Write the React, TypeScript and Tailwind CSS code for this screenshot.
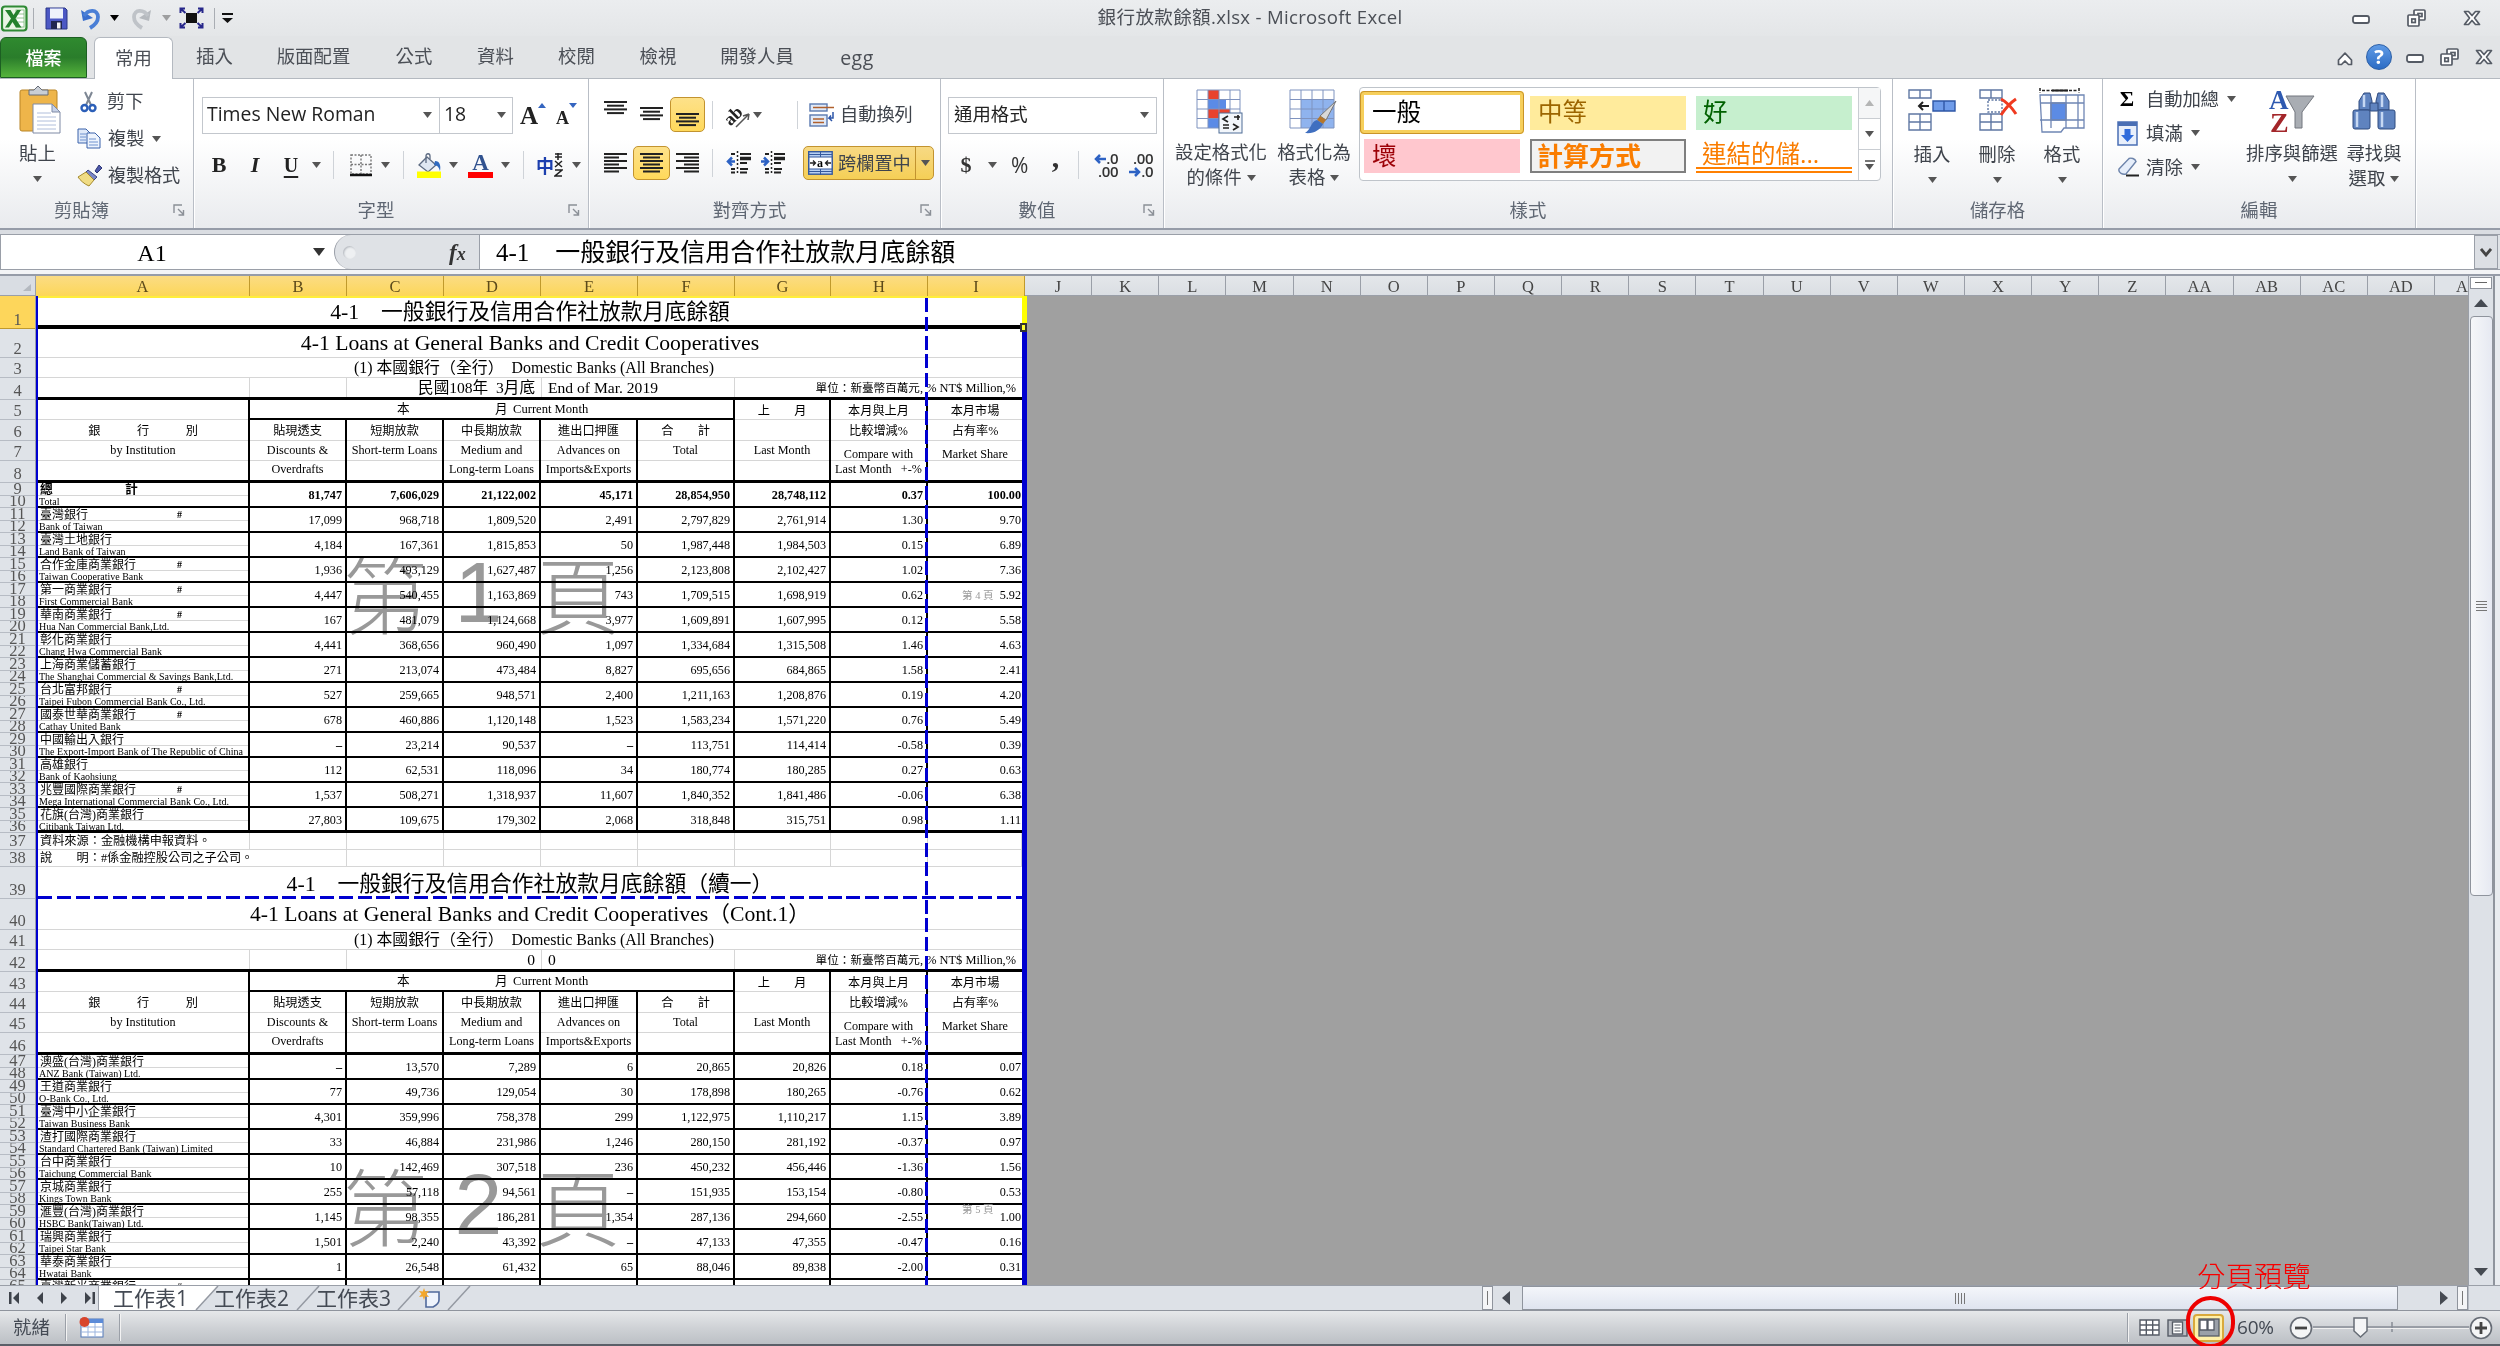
import React from "react";

/* ---------- data ---------- */

type Bank = { zh: string; en: string; mark?: boolean; v: string[] };

const PAGE_ONE: Bank[] = [
  { zh: "臺灣銀行", en: "Bank of Taiwan", mark: true, v: ["17,099", "968,718", "1,809,520", "2,491", "2,797,829", "2,761,914", "1.30", "9.70"] },
  { zh: "臺灣土地銀行", en: "Land Bank of Taiwan", v: ["4,184", "167,361", "1,815,853", "50", "1,987,448", "1,984,503", "0.15", "6.89"] },
  { zh: "合作金庫商業銀行", en: "Taiwan Cooperative Bank", mark: true, v: ["1,936", "493,129", "1,627,487", "1,256", "2,123,808", "2,102,427", "1.02", "7.36"] },
  { zh: "第一商業銀行", en: "First Commercial Bank", mark: true, v: ["4,447", "540,455", "1,163,869", "743", "1,709,515", "1,698,919", "0.62", "5.92"] },
  { zh: "華南商業銀行", en: "Hua Nan Commercial Bank,Ltd.", mark: true, v: ["167", "481,079", "1,124,668", "3,977", "1,609,891", "1,607,995", "0.12", "5.58"] },
  { zh: "彰化商業銀行", en: "Chang Hwa Commercial Bank", v: ["4,441", "368,656", "960,490", "1,097", "1,334,684", "1,315,508", "1.46", "4.63"] },
  { zh: "上海商業儲蓄銀行", en: "The Shanghai Commercial & Savings Bank,Ltd.", v: ["271", "213,074", "473,484", "8,827", "695,656", "684,865", "1.58", "2.41"] },
  { zh: "台北富邦銀行", en: "Taipei Fubon Commercial Bank Co., Ltd.", mark: true, v: ["527", "259,665", "948,571", "2,400", "1,211,163", "1,208,876", "0.19", "4.20"] },
  { zh: "國泰世華商業銀行", en: "Cathay United Bank", mark: true, v: ["678", "460,886", "1,120,148", "1,523", "1,583,234", "1,571,220", "0.76", "5.49"] },
  { zh: "中國輸出入銀行", en: "The Export-Import Bank of The Republic of China", v: ["–", "23,214", "90,537", "–", "113,751", "114,414", "-0.58", "0.39"] },
  { zh: "高雄銀行", en: "Bank of Kaohsiung", v: ["112", "62,531", "118,096", "34", "180,774", "180,285", "0.27", "0.63"] },
  { zh: "兆豐國際商業銀行", en: "Mega International Commercial Bank Co., Ltd.", mark: true, v: ["1,537", "508,271", "1,318,937", "11,607", "1,840,352", "1,841,486", "-0.06", "6.38"] },
  { zh: "花旗(台灣)商業銀行", en: "Citibank Taiwan Ltd.", v: ["27,803", "109,675", "179,302", "2,068", "318,848", "315,751", "0.98", "1.11"] },
];

const PAGE_TWO: Bank[] = [
  { zh: "澳盛(台灣)商業銀行", en: "ANZ Bank (Taiwan) Ltd.", v: ["–", "13,570", "7,289", "6", "20,865", "20,826", "0.18", "0.07"] },
  { zh: "王道商業銀行", en: "O-Bank Co., Ltd.", v: ["77", "49,736", "129,054", "30", "178,898", "180,265", "-0.76", "0.62"] },
  { zh: "臺灣中小企業銀行", en: "Taiwan Business Bank", v: ["4,301", "359,996", "758,378", "299", "1,122,975", "1,110,217", "1.15", "3.89"] },
  { zh: "渣打國際商業銀行", en: "Standard Chartered Bank (Taiwan) Limited", v: ["33", "46,884", "231,986", "1,246", "280,150", "281,192", "-0.37", "0.97"] },
  { zh: "台中商業銀行", en: "Taichung Commercial Bank", v: ["10", "142,469", "307,518", "236", "450,232", "456,446", "-1.36", "1.56"] },
  { zh: "京城商業銀行", en: "Kings Town Bank", v: ["255", "57,118", "94,561", "–", "151,935", "153,154", "-0.80", "0.53"] },
  { zh: "滙豐(台灣)商業銀行", en: "HSBC Bank(Taiwan) Ltd.", v: ["1,145", "98,355", "186,281", "1,354", "287,136", "294,660", "-2.55", "1.00"] },
  { zh: "瑞興商業銀行", en: "Taipei Star Bank", v: ["1,501", "2,240", "43,392", "–", "47,133", "47,355", "-0.47", "0.16"] },
  { zh: "華泰商業銀行", en: "Hwatai Bank", v: ["1", "26,548", "61,432", "65", "88,046", "89,838", "-2.00", "0.31"] },
  { zh: "臺灣新光商業銀行", en: "", mark: true, v: ["", "", "", "", "", "", "", ""] },
];

const pairs = (n: number) => Array.from({ length: n * 2 }, (_, i) => (i % 2 ? 12 : 13));
const ROW_HEIGHTS = [33, 29, 20, 22, 20, 21, 20, 22, ...pairs(14), 17, 17, 32, 31, 20, 22, 21, 20, 20, 22, ...pairs(9), 13];

const GRID = "grid grid-cols-[212px_97px_97px_97px_97px_97px_96px_97px_94px]";
const LINE = "border-[#d6d6d6]";
const SANS = "[font-family:'Open_Sans','Noto_Sans_CJK_TC',sans-serif]";
const SERIF = "[font-family:'Liberation_Serif','Noto_Sans_CJK_TC',serif]";

/* ---------- small pieces ---------- */

function Caret({ className = "" }: { className?: string }) {
  return (
    <svg className={`shrink-0 ${className}`} width="9" height="6" viewBox="0 0 9 6">
      <path d="M0 0h9L4.500 6z" fill="#555" />
    </svg>
  );
}

function Sep({ className = "" }: { className?: string }) {
  return <div className={`h-7 w-px shrink-0 bg-[#cfd3d8] ${className}`} />;
}

function Launcher() {
  return (
    <svg className="mr-[8px] ml-[10px] shrink-0" width="12" height="12" viewBox="0 0 12 12" fill="none" stroke="#8b9097" strokeWidth="1.400">
      <path d="M1 9V1h8M5 5l5 5M10.500 6v5H5.500" />
    </svg>
  );
}

function Group({ w, label, launcher, children }: { w: string; label: string; launcher?: boolean; children: React.ReactNode }) {
  return (
    <section className={`flex h-full shrink-0 flex-col border-r border-[#b9bec6] shadow-[1px_0_0_#fff] ${w}`}>
      <div className="h-[120px] w-full">{children}</div>
      <div className="flex h-[22px] items-center justify-center text-[18.400px] leading-none text-[#5f6773]">
        <span className="flex-1 text-center whitespace-nowrap">{label}</span>
        {launcher && <Launcher />}
      </div>
    </section>
  );
}

type LinesProps = { widths: number[]; align?: "l" | "c" | "r"; gap?: number };
function Lines({ widths, align = "c", gap = 4 }: LinesProps) {
  const h = widths.length * gap;
  return (
    <svg className="shrink-0" width="23" height={h} viewBox={`0 0 23 ${h}`}>
      {widths.map((w, i) => (
        <rect key={i} x={align === "l" ? 0 : align === "r" ? 23 - w : (23 - w) / 2} y={i * gap} width={w} height="2" fill="#222" />
      ))}
    </svg>
  );
}

/* ---------- title bar ---------- */

function WinMin() {
  return (
    <svg width="19" height="10" viewBox="0 0 19 10">
      <rect x="1" y="1" width="16" height="7" rx="2" fill="#fff" stroke="#555b65" strokeWidth="1.800" />
    </svg>
  );
}
function WinRestore() {
  return (
    <svg width="20" height="18" viewBox="0 0 20 18" fill="#fff" stroke="#555b65" strokeWidth="1.700">
      <rect x="7" y="1" width="11" height="10" rx="1" />
      <rect x="11" y="4.500" width="4" height="3" />
      <rect x="1" y="6" width="11" height="11" rx="1" />
      <rect x="4.800" y="10" width="3.500" height="3.500" />
    </svg>
  );
}
function WinClose() {
  return (
    <svg width="18" height="16" viewBox="0 0 18 16">
      <path d="M1.500 1.500h4L9 5.500l3.500-4h4L11.500 8l5 6.500h-4L9 10.500l-3.500 4h-4L6.500 8z" fill="#fff" stroke="#555b65" strokeWidth="1.700" strokeLinejoin="round" />
    </svg>
  );
}

function TitleBar() {
  return (
    <header className="flex h-[36px] w-full items-center bg-linear-to-b from-[#ebedef] to-[#e4e6e8]">
      <div className="flex w-[260px] items-center">
        <svg className="ml-[1px]" width="27" height="27" viewBox="0 0 27 27">
          <rect x="1" y="1.500" width="24.500" height="24" rx="3" fill="#e9f5e4" stroke="#2f8a35" strokeWidth="2.200" />
          <rect x="15" y="5" width="8" height="17" fill="#fff" stroke="#79b87a" strokeWidth=".8" />
          <path d="M16 9h7M16 13h7M16 17h7" stroke="#79b87a" strokeWidth=".8" />
          <path d="M4 5h5.500l3 5 3.500-5h4l-5.500 8.500 6 9h-5.500l-3.500-5.500-3.500 5.500H4l6-9z" fill="#24812d" />
        </svg>
        <div className="ml-[5px] h-[21px] w-px bg-[#a9adb3]" />
        <svg className="ml-[11px]" width="23" height="23" viewBox="0 0 23 23">
          <path d="M1 1h19l2 2v19H1z" fill="#4c58c4" stroke="#2b3688" />
          <rect x="5" y="1.500" width="13" height="10" fill="#eef2fb" />
          <rect x="6" y="14" width="11" height="8" fill="#20264f" />
          <rect x="12" y="15.500" width="3.500" height="6" fill="#f4f4f4" />
        </svg>
        <svg className="ml-[12px]" width="21" height="23" viewBox="0 0 21 23">
          <path d="M1 3l2 11 10-3z" fill="#3a6fce" />
          <path d="M4 9C8 2 18 2 18 10c0 5-3 8-8 11" fill="none" stroke="#4a7fd6" strokeWidth="3.800" />
        </svg>
        <Caret className="ml-[9px] brightness-0" />
        <svg className="ml-[12px]" width="21" height="23" viewBox="0 0 21 23">
          <path d="M20 3l-2 11-10-3z" fill="#b5b9be" />
          <path d="M17 9C13 2 3 2 3 10c0 5 3 8 8 11" fill="none" stroke="#bfc3c8" strokeWidth="3.800" />
        </svg>
        <Caret className="ml-[10px] opacity-50" />
        <svg className="ml-[8px]" width="25" height="22" viewBox="0 0 25 22">
          <path d="M1.500 6V1.500H6M1.500 1.500 6.500 6M23.500 6V1.500H19M23.500 1.500 18.500 6M1.500 16v4.500H6M1.500 20.500l5-4.500M23.500 16v4.500H19M23.500 20.500l-5-4.500" fill="none" stroke="#27278a" strokeWidth="2" />
          <rect x="7" y="6" width="11" height="10" fill="#111" />
        </svg>
        <div className="ml-[10px] h-[21px] w-px bg-[#a9adb3]" />
        <svg className="ml-[7px]" width="11" height="11" viewBox="0 0 11 11">
          <path d="M0 0h11v2H0zM0 5h11L5.500 10z" fill="#111" />
        </svg>
      </div>
      <div className="flex-1 pb-[1px] text-center text-[18.600px] leading-none tracking-[0.300px] text-[#4b4f56]">銀行放款餘額.xlsx - Microsoft Excel</div>
      <div className="flex w-[260px] items-center justify-end pr-[19px]">
        <div className="mt-1 mr-[36px]"><WinMin /></div>
        <div className="mr-[36px]"><WinRestore /></div>
        <WinClose />
      </div>
    </header>
  );
}

/* ---------- ribbon tabs ---------- */

function RibbonTabs() {
  const tab = "flex h-full items-center justify-center pb-[1px]";
  return (
    <nav className="flex h-[43px] w-full items-end border-b border-[#b4b9c0] bg-[#e2e4e6] text-[18.400px] leading-none text-[#4b4f56]">
      <div className="mt-[2px] flex h-[41px] w-[87px] items-center justify-center rounded-t-md border border-[#1c5f22] bg-linear-to-b from-[#2f8a2f] via-[#2a7d2b] to-[#55b43c] text-[18px] font-medium text-white">檔案</div>
      <div className="relative -mb-px ml-[7px] flex h-[42px] w-[79px] items-center justify-center rounded-t-md border border-b-0 border-[#b4b9c0] bg-white">常用</div>
      <div className={`${tab} ml-px w-[81px]`}>插入</div>
      <div className={`${tab} w-[117px]`}>版面配置</div>
      <div className={`${tab} w-[84px]`}>公式</div>
      <div className={`${tab} w-[79px]`}>資料</div>
      <div className={`${tab} w-[83px]`}>校閱</div>
      <div className={`${tab} w-[80px]`}>檢視</div>
      <div className={`${tab} w-[118px]`}>開發人員</div>
      <div className={`${tab} w-[82px] pt-[2px] text-[19.500px] tracking-[0.500px]`}>egg</div>
      <div className="flex h-full flex-1 items-center justify-end pr-[7px]">
        <svg className="mt-1 mr-[13px]" width="16" height="14" viewBox="0 0 16 14">
          <path d="M8 1.200 14.500 8v4.500h-3L8 9l-3.500 3.500h-3V8z" fill="#fff" stroke="#555b65" strokeWidth="1.700" strokeLinejoin="round" />
        </svg>
        <div className="mr-[14px] flex size-[26px] items-center justify-center rounded-full border border-[#2a5ea6] bg-linear-to-b from-[#5f9be6] to-[#2c6cc4] text-[20px] leading-none font-bold text-white">?</div>
        <div className="mt-1 mr-[15px]"><WinMin /></div>
        <div className="mr-[15px]"><WinRestore /></div>
        <WinClose />
      </div>
    </nav>
  );
}

/* ---------- ribbon ---------- */

function ClipboardGroup() {
  return (
    <Group w="w-[194px]" label="剪貼簿" launcher>
      <div className="flex h-full">
        <div className="flex w-[75px] flex-col items-center pt-[7px]">
          <svg className="ml-[4px]" width="42" height="48" viewBox="0 0 42 48">
            <rect x="1" y="4" width="37" height="41" rx="2" fill="#eeb54a" stroke="#b98526" />
            <path d="M10 9V4h5l4-4 4 4h6v5z" fill="#c9ced6" stroke="#666c77" />
            <path d="M14 18h19l8 8v21H14z" fill="#fff" stroke="#7e8aa5" />
            <path d="M33 18v8h8z" fill="#c7d2e8" stroke="#7e8aa5" />
            <path d="M18 27h14M18 31h19M18 35h19M18 39h19M18 43h19" stroke="#b0bedb" />
          </svg>
          <span className="mt-[10px] text-[18.400px] leading-none">貼上</span>
          <Caret className="mt-[14px]" />
        </div>
        <div className="flex flex-col pt-[4px] text-[18.200px] leading-none whitespace-nowrap">
          <div className="flex h-[37px] items-center">
            <svg className="ml-[5px]" width="17" height="22" viewBox="0 0 17 22" fill="none">
              <path d="M5 1l6 13M12 1 6 14" stroke="#7e8794" strokeWidth="2" />
              <circle cx="4.500" cy="17" r="3" stroke="#2c5fb8" strokeWidth="2.400" />
              <circle cx="12.500" cy="17" r="3" stroke="#2c5fb8" strokeWidth="2.400" />
            </svg>
            <span className="ml-[10px]">剪下</span>
          </div>
          <div className="flex h-[37px] items-center">
            <svg className="ml-[2px]" width="24" height="21" viewBox="0 0 24 21">
              <path d="M1 1h8l4 4v10H1z" fill="#dfe9f9" stroke="#3b63ab" />
              <path d="M10 5h8l5 5v10H10z" fill="#eef4fd" stroke="#3b63ab" />
              <path d="M3 6h6M3 9h6M3 12h6M12 11h7M12 14h9M12 17h9" stroke="#6f92cf" />
            </svg>
            <span className="ml-[7px]">複製</span>
            <Caret className="ml-[8px]" />
          </div>
          <div className="flex h-[37px] items-center">
            <svg className="ml-[2px]" width="25" height="23" viewBox="0 0 25 23">
              <path d="M18 7l4-6 3 3-5 5z" fill="#4c58a8" stroke="#2d3576" />
              <path d="M11 6l9 7-3 3-9-7z" fill="#7a86c6" stroke="#3d4686" />
              <path d="M9 8l8 8-5 6C7 20 3 16 1 13z" fill="#f0dc84" stroke="#a58a2d" />
            </svg>
            <span className="ml-[6px] tracking-[-0.200px]">複製格式</span>
          </div>
        </div>
      </div>
    </Group>
  );
}

function FontGroup() {
  return (
    <Group w="w-[395px]" label="字型" launcher>
      <div className="flex h-full flex-col pl-[8px]">
        <div className="flex h-[72px] items-center">
          <div className="flex h-[37px] w-[238px] items-center justify-between border border-[#c3c7cd] bg-white pr-[7px] pl-[4px]">
            <span className="pb-[2px] text-[19.400px] leading-none text-[#222]">Times New Roman</span>
            <Caret />
          </div>
          <div className="-ml-px flex h-[37px] w-[74px] items-center justify-between border border-[#c3c7cd] bg-white pr-[6px] pl-[4px]">
            <span className="pb-[2px] text-[19.400px] leading-none text-[#222]">18</span>
            <Caret />
          </div>
          <div className={`ml-[7px] flex items-start ${SERIF} text-[#222]`}>
            <span className="text-[25px] leading-none font-bold">A</span>
            <svg width="8" height="6" viewBox="0 0 8 6"><path d="M0 5h8L4 0z" fill="#3565c0" /></svg>
            <span className="mt-[6px] ml-[10px] text-[18px] leading-none font-bold">A</span>
            <svg width="8" height="6" viewBox="0 0 8 6"><path d="M0 0h8L4 5z" fill="#3565c0" /></svg>
          </div>
        </div>
        <div className={`-mt-[2px] flex h-[32px] items-center ${SERIF} text-[#222]`}>
          <span className="w-[34px] text-center text-[22px] leading-none font-bold">B</span>
          <span className="w-[38px] text-center text-[22px] leading-none font-bold italic">I</span>
          <span className="w-[34px] text-center text-[20px] leading-none font-bold underline underline-offset-4">U</span>
          <Caret className="ml-[4px]" />
          <Sep className="ml-[12px]" />
          <svg className="ml-[16px]" width="22" height="23" viewBox="0 0 22 23" fill="none">
            <path d="M1 1h20v19H1zM11 1v19M1 10.500h20" stroke="#777" strokeWidth="1.400" strokeDasharray="2 1.500" />
            <path d="M0 21h22" stroke="#111" strokeWidth="2.500" />
          </svg>
          <Caret className="ml-[9px]" />
          <Sep className="ml-[13px]" />
          <svg className="ml-[12px]" width="26" height="25" viewBox="0 0 26 25">
            <path d="M11 4l9 8-8 7-9-7z" fill="#dfe7f2" stroke="#5d6b82" strokeWidth="1.300" />
            <path d="M10 10V3c0-3 4-3 4 0v3" fill="none" stroke="#5d6b82" strokeWidth="1.300" />
            <path d="M19 8c5 0 6 5 5 10-1-4-3-6-6-6z" fill="#2f6ac0" />
            <rect x="1" y="18.500" width="24" height="6.500" fill="#ffff00" />
          </svg>
          <Caret className="ml-[7px]" />
          <div className="ml-[10px] flex w-[25px] flex-col items-center">
            <span className="text-[23px] leading-[19px] font-bold text-[#31528f]">A</span>
            <span className="h-[6px] w-[25px] bg-[#f00]" />
          </div>
          <Caret className="ml-[8px]" />
          <Sep className="ml-[13px]" />
          <span className="ml-[12px] text-[18px] leading-none font-bold text-[#1c3fae] [font-family:'Noto_Sans_CJK_TC',sans-serif]">中</span>
          <svg width="9" height="24" viewBox="0 0 9 24" fill="none" stroke="#222" strokeWidth="1.500">
            <path d="M1 1h7M1 4h7M4 0v7M1 8l7 6M8 8l-7 6M1 17h7l-7 6h7" />
          </svg>
          <Caret className="ml-[9px]" />
        </div>
      </div>
    </Group>
  );
}

function AlignGroup() {
  const lit = "flex items-center justify-center rounded-[5px] border border-[#c2932f] bg-linear-to-b from-[#fde189] to-[#ffd95a]";
  return (
    <Group w="w-[352px]" label="對齊方式" launcher>
      <div className="flex h-full flex-col">
        <div className="flex h-[71px] items-center">
          <div className="-mt-[12px] ml-[15px]"><Lines widths={[23, 17, 23, 17]} gap={3.700} /></div>
          <div className="ml-[13px]"><Lines widths={[23, 17, 23, 17]} gap={3.700} /></div>
          <div className={`ml-[7px] h-[35px] w-[35px] ${lit} pt-[12px]`}><Lines widths={[23, 17, 23, 17]} gap={3.700} /></div>
          <Sep className="ml-[7px]" />
          <svg className="ml-[12px] overflow-visible" width="26" height="26" viewBox="0 0 26 26">
            <text x="-1" y="19" transform="rotate(-45 9 14)" fontSize="18" fontWeight="700" fontFamily="Liberation Serif" fill="#222">ab</text>
            <path d="M11 25 24 12M24 12l-6 2M24 12l-1 6" stroke="#555" strokeWidth="1.500" fill="none" />
          </svg>
          <Caret className="ml-[2px]" />
          <Sep className="ml-[35px]" />
          <svg className="ml-[11px]" width="26" height="24" viewBox="0 0 26 24">
            <rect x="1" y="1" width="17" height="7" fill="#dfe9f8" stroke="#5a79b0" strokeWidth="1.400" />
            <rect x="1" y="12" width="17" height="11" fill="#dfe9f8" stroke="#5a79b0" strokeWidth="1.400" />
            <path d="M4 4.500h21" stroke="#b0602c" strokeWidth="1.500" />
            <path d="M4 16h11M4 19.500h11" stroke="#b0602c" strokeWidth="1.300" />
            <path d="M24 9v6h-4l2-2.500M20 15l3 3" stroke="#2d55a8" strokeWidth="1.500" fill="none" />
          </svg>
          <span className="ml-[5px] text-[18.200px] leading-none">自動換列</span>
        </div>
        <div className="-mt-[4px] flex h-[34px] items-center">
          <div className="ml-[15px]"><Lines widths={[23, 15, 23, 15, 23, 15]} align="l" gap={3.500} /></div>
          <div className={`ml-[6px] h-[34px] w-[37px] ${lit}`}><Lines widths={[23, 17, 23, 17, 23, 17]} gap={3.500} /></div>
          <div className="ml-[6px]"><Lines widths={[23, 15, 23, 15, 23, 15]} align="r" gap={3.500} /></div>
          <Sep className="ml-[13px]" />
          {["M9 10.500H3M6 6.500l-4 4 4 4", "M1 10.500h6M4 6.500l4 4-4 4"].map((d, i) => (
            <svg key={i} className={i ? "ml-[9px]" : "ml-[13px]"} width="25" height="24" viewBox="0 0 25 24" fill="none">
              <path d="M11.500 0v24" stroke="#222" strokeWidth="1.500" strokeDasharray="2 2" />
              <path d="M5 3h4M14 3h11M14 12h7M5 18h4M14 18h8M5 21.500h4M14 21.500h7" stroke="#222" strokeWidth="2" />
              <path d="M14 7.500h11" stroke="#222" strokeWidth="3.500" />
              <path d={d} stroke="#2d62c4" strokeWidth="2.500" />
            </svg>
          ))}
          <div className="ml-[18px] flex h-[34px] w-[131px] items-center rounded-[5px] border border-[#c2932f] bg-linear-to-b from-[#f7d983] to-[#f5cf55]">
            <svg className="ml-[4px]" width="25" height="24" viewBox="0 0 25 24">
              <rect x=".7" y=".7" width="23.500" height="22.500" fill="#b8d0f2" stroke="#35599d" strokeWidth="1.400" />
              <rect x="1" y="6" width="23" height="12" fill="#fff" stroke="#35599d" />
              <path d="M12.500 0v6M12.500 18v6M1 3.500h23M1 20.500h23" stroke="#35599d" />
              <path d="M2 12h5M5 9.500 7.500 12 5 14.500M23 12h-5M20 9.500 17.500 12l2.500 2.500" stroke="#222" fill="none" strokeWidth="1.300" />
              <text x="9" y="16" fontSize="12" fontWeight="700" fontFamily="Liberation Serif">a</text>
            </svg>
            <span className="ml-[5px] w-[75px] text-[18.200px] leading-none whitespace-nowrap">跨欄置中</span>
            <div className="ml-[2px] h-full w-px bg-[#c2932f]" />
            <Caret className="ml-[5px]" />
          </div>
        </div>
      </div>
    </Group>
  );
}

function NumberGroup() {
  return (
    <Group w="w-[223px]" label="數值" launcher>
      <div className="flex h-full flex-col pl-[7px]">
        <div className="flex h-[72px] items-center">
          <div className="flex h-[37px] w-[209px] items-center justify-between border border-[#c3c7cd] bg-white pr-[7px] pl-[5px]">
            <span className="pb-[2px] text-[18.400px] leading-none text-[#222]">通用格式</span>
            <Caret />
          </div>
        </div>
        <div className="-mt-[2px] flex h-[32px] items-center leading-none text-[#333]">
          <span className={`w-[36px] text-center text-[22px] font-bold ${SERIF}`}>$</span>
          <Caret className="ml-[4px]" />
          <span className="ml-[14px] text-[21px]">%</span>
          <span className={`-mt-4 ml-[20px] w-[14px] text-center text-[30px] leading-none font-bold ${SERIF}`}>,</span>
          <Sep className="ml-[16px]" />
          {[["←", ".0", ".00", ""], ["", ".00", ".0", "→"]].map(([l, a, b, r], i) => (
            <div key={i} className={`${i ? "ml-[9px]" : "ml-[13px]"} flex w-[26px] flex-col items-end text-[15px] leading-[13px] font-semibold tracking-[-0.300px]`}>
              <span className="flex items-center">{l && <svg width="12" height="10" viewBox="0 0 12 10"><path d="M12 5H3M6 1 2 5l4 4" stroke="#2d62c4" strokeWidth="2.500" fill="none" /></svg>}{a}</span>
              <span className="flex items-center">{r && <svg width="12" height="10" viewBox="0 0 12 10"><path d="M0 5h9M6 1l4 4-4 4" stroke="#2d62c4" strokeWidth="2.500" fill="none" /></svg>}{b}</span>
            </div>
          ))}
        </div>
      </div>
    </Group>
  );
}

function StylesGroup() {
  const chip = "flex h-[34px] w-[156px] items-center text-[24.500px] leading-none whitespace-nowrap";
  return (
    <Group w="w-[729px]" label="樣式">
      <div className="flex h-full">
        <div className="flex w-[110px] flex-col items-center pt-[10px] pl-[4px]">
          <svg className="mr-[4px]" width="47" height="45" viewBox="0 0 47 45">
            <rect x="1" y="1" width="43" height="38" fill="#fff" />
            <rect x="12" y="1" width="11" height="9" fill="#e8432e" />
            <rect x="12" y="10" width="18" height="10" fill="#5b8be6" />
            <rect x="12" y="20" width="22" height="10" fill="#e8432e" />
            <rect x="12" y="30" width="11" height="9" fill="#5b8be6" />
            <path d="M1 1h43v38H1zM12 1v38M23 1v38M34 1v38M1 10.500h43M1 20h43M1 29.500h43" stroke="#7f93bf" fill="none" />
            <rect x="23" y="24" width="23" height="20" fill="#f2f6fb" stroke="#4e6c96" />
            <path d="M32 27l-5 3 5 3M27 36h6M27 39h6M42 26v5M38 28h6M37 35l5 3-5 3" stroke="#222" strokeWidth="1.700" fill="none" />
          </svg>
          <span className="mt-[9px] text-[18.400px] leading-none whitespace-nowrap">設定格式化</span>
          <span className="mt-[7px] flex items-center text-[18.400px] leading-none whitespace-nowrap">的條件<Caret className="ml-[5px]" /></span>
        </div>
        <div className="flex w-[80px] flex-col items-center pt-[10px]">
          <svg className="mr-[3px]" width="48" height="45" viewBox="0 0 48 45">
            <rect x="1" y="1" width="44" height="38" fill="#fff" />
            <rect x="12" y="10.500" width="33" height="28.500" fill="#8fb3ee" />
            <path d="M1 1h44v38H1zM12 1v38M23 1v38M34 1v38M1 10.500h44M1 20h44M1 29.500h44" stroke="#7f93bf" fill="none" />
            <path d="M47 12 37 31l-6-4z" fill="#d9d9d9" stroke="#777" />
            <path d="M31 27l6 4-3 4-6-4z" fill="#b5772c" />
            <path d="M28 31l6 4c-3 6-9 10-18 9 6-3 6-12 12-13z" fill="#3f6fc0" />
          </svg>
          <span className="mt-[9px] text-[18.400px] leading-none whitespace-nowrap">格式化為</span>
          <span className="mt-[7px] flex items-center text-[18.400px] leading-none whitespace-nowrap">表格<Caret className="ml-[5px]" /></span>
        </div>
        <div className="mt-[8px] ml-[5px] flex h-[94px] w-[522px] rounded-sm border border-[#bfc4ca] bg-white">
          <div className="flex w-[498px] flex-col">
            <div className="flex h-[49px] items-center">
              <div className="flex h-[43px] w-[164px] items-center rounded-[4px] border-[4px] border-[#f6cf5b] pl-[8px] text-[24.500px] leading-none text-black outline-1 -outline-offset-1 outline-[#c99428]">一般</div>
              <div className={`ml-[6px] bg-[#ffeb9c] pl-[8px] text-[#9c6500] ${chip}`}>中等</div>
              <div className={`ml-[10px] bg-[#c6efce] pl-[7px] text-[#006100] ${chip}`}>好</div>
            </div>
            <div className="flex h-[38px] items-center">
              <div className={`ml-[4px] bg-[#ffc7ce] pl-[8px] text-[#9c0006] ${chip}`}>壞</div>
              <div className={`ml-[10px] border-2 border-[#7f7f7f] bg-[#f2f2f2] pl-[5px] font-bold text-[#fa7d00] ${chip} text-[26px]`}>計算方式</div>
              <div className={`ml-[10px] border-b-[6px] border-double border-[#ff8001] pt-[3px] pl-[6px] text-[#fa7d00] ${chip}`}>連結的儲...</div>
            </div>
          </div>
          <div className="flex flex-1 flex-col border-l border-[#c9cdd2]">
            <div className="flex h-[31px] items-center justify-center border-b border-[#c9cdd2] bg-[#f5f6f7]">
              <Caret className="rotate-180 opacity-40" />
            </div>
            <div className="flex h-[31px] items-center justify-center border-b border-[#c9cdd2]">
              <Caret />
            </div>
            <div className="flex flex-1 flex-col items-center justify-center gap-[2px]">
              <span className="h-[2px] w-[10px] bg-[#777]" />
              <Caret />
            </div>
          </div>
        </div>
      </div>
    </Group>
  );
}

function CellsGroup() {
  const item = "flex flex-col items-center";
  return (
    <Group w="w-[210px]" label="儲存格">
      <div className="flex h-full pt-[9px] pl-[6px] text-[18.400px] leading-none">
        <div className={`${item} w-[66px]`}>
          <svg width="48" height="46" viewBox="0 0 48 46" fill="#fff" stroke="#5f77a3" strokeWidth="1.400">
            <path d="M1 2h22v8H1zM12 2v8M1 26h22v16H1zM12 26v16M1 34h22" />
            <path d="M25 13h22v10H25z" fill="#6f9cea" stroke="#2f57a6" />
            <path d="M36 13v10" stroke="#2f57a6" />
            <path d="M21 18H11M15 14l-4 4 4 4" fill="none" stroke="#222" strokeWidth="2" />
          </svg>
          <span className="mt-[11px]">插入</span>
          <Caret className="mt-[14px]" />
        </div>
        <div className={`${item} w-[64px]`}>
          <svg className="ml-[2px]" width="39" height="46" viewBox="0 0 39 46" fill="#fff" stroke="#5f77a3" strokeWidth="1.400">
            <path d="M1 2h22v8H1zM12 2v8M1 26h22v16H1zM12 26v16M1 34h22" />
            <path d="M9 12h14v12H9z" strokeDasharray="2 1.500" />
            <path d="M22 11c6 3 11 9 15 15M37 11c-6 4-11 10-15 16" fill="none" stroke="#f03a20" strokeWidth="3" />
          </svg>
          <span className="mt-[11px]">刪除</span>
          <Caret className="mt-[14px]" />
        </div>
        <div className={`${item} w-[66px]`}>
          <svg width="48" height="46" viewBox="0 0 48 46" fill="#fff" stroke="#6f86b4" strokeWidth="1.300">
            <path d="M2 7h44v33H26l-3 4H4z" />
            <path d="M13 15h15v17H13z" fill="#5c8be4" />
            <path d="M13 7v33M28 7v33M40 7v33M2 15h44M2 32h44" fill="none" />
            <path d="M2 0v5M41 0v5M4 2.500h36" stroke="#222" strokeWidth="1.500" strokeDasharray="3 1.500" />
            <path d="M14 2.500h16" stroke="#222" strokeWidth="2" />
          </svg>
          <span className="mt-[11px]">格式</span>
          <Caret className="mt-[14px]" />
        </div>
      </div>
    </Group>
  );
}

function EditingGroup() {
  return (
    <Group w="w-[313px]" label="編輯">
      <div className="flex h-full text-[18.400px] leading-none whitespace-nowrap">
        <div className="flex w-[138px] flex-col pt-[3px] pl-[14px]">
          <div className="flex h-[34px] items-center">
            <span className={`w-[20px] text-center text-[22px] leading-none font-bold text-black ${SERIF}`}>Σ</span>
            <span className="ml-[9px] tracking-[-0.200px]">自動加總</span>
            <Caret className="ml-[8px]" />
          </div>
          <div className="flex h-[34px] items-center">
            <svg width="21" height="25" viewBox="0 0 21 25">
              <rect x="1" y="1" width="19" height="23" fill="#e8effb" stroke="#4a6fb5" strokeWidth="1.500" />
              <rect x="1" y="1" width="19" height="4" fill="#4a6fb5" />
              <path d="M7.500 8h6v6h3.500l-6.500 7-6.500-7h3.500z" fill="#2f6bdb" />
            </svg>
            <span className="ml-[8px]">填滿</span>
            <Caret className="ml-[8px]" />
          </div>
          <div className="flex h-[34px] items-center">
            <svg width="22" height="20" viewBox="0 0 22 20">
              <path d="M2 12 12 1.500c2-1 6 0 7 3L9 17c-3 1-8-1-7-5z" fill="#e6eefa" stroke="#6c83aa" strokeWidth="1.400" />
              <path d="M9 18.500h13" stroke="#222" strokeWidth="2" />
            </svg>
            <span className="ml-[7px]">清除</span>
            <Caret className="ml-[8px]" />
          </div>
        </div>
        <div className="flex w-[102px] flex-col items-center pt-[9px]">
          <svg className="overflow-visible" width="46" height="46" viewBox="0 0 46 46">
            <path d="M17 8h28L33 24v16h-7V24z" fill="#a9adb3" stroke="#73777e" />
            <text x="0" y="21" fontSize="27" fontWeight="700" fontFamily="Liberation Serif" fill="#2e59b0">A</text>
            <text x="1" y="44" fontSize="28" fontWeight="700" fontFamily="Liberation Serif" fill="#a3262a">Z</text>
          </svg>
          <span className="mt-[10px]">排序與篩選</span>
          <Caret className="mt-[14px]" />
        </div>
        <div className="flex w-[62px] flex-col items-center pt-[12px]">
          <svg width="44" height="39" viewBox="0 0 44 39" fill="#5f83bf" stroke="#2f4a7f">
            <path d="M12 2h6l2 8v9H7v-9zM32 2h-6l-2 8v9h13v-9z" />
            <rect x="18" y="12" width="8" height="8" />
            <rect x="1" y="19" width="17" height="19" rx="2" />
            <rect x="26" y="19" width="17" height="19" rx="2" />
            <path d="M5 21v15M30 21v15M12 4v12M30 4v12" stroke="#c6d8f3" strokeWidth="2.500" />
          </svg>
          <span className="mt-[14px]">尋找與</span>
          <span className="mt-[7px] flex items-center">選取<Caret className="ml-[5px]" /></span>
        </div>
      </div>
    </Group>
  );
}

/* ---------- formula bar ---------- */

function FormulaBar() {
  return (
    <div className="flex h-[48px] w-full flex-col border-t-2 border-[#969ca8] bg-[#dadde2] pt-[4px]">
      <div className="flex h-[37px] border-y border-[#9a9fa8] bg-[#dfe2e6]">
        <div className="flex w-[345px] items-center border-l border-[#9a9fa8] bg-white">
          <span className={`w-[302px] pt-[2px] text-center text-[24px] leading-none text-black ${SERIF}`}>A1</span>
          <svg className="ml-[10px]" width="12" height="8" viewBox="0 0 12 8"><path d="M0 0h12L6 8z" fill="#333" /></svg>
        </div>
        <div className="-ml-[11px] flex w-[145px] items-center rounded-l-full border-l border-[#9a9fa8] bg-[#dfe2e6]">
          <span className="ml-[8px] size-[13px] rounded-full bg-[#eef0f2] shadow-[inset_1px_1px_2px_#b4b8be]" />
          <span className={`ml-[93px] text-[23px] leading-none font-bold italic text-[#333] ${SERIF}`}>f<span className="text-[18px]">x</span></span>
        </div>
        <div className={`flex flex-1 items-center border-l border-[#9a9fa8] bg-white pl-[16px] text-[25px] leading-none text-black ${SERIF}`}>
          <span>4-1</span>
          <span className="ml-[26px] pt-[1px]">一般銀行及信用合作社放款月底餘額</span>
        </div>
        <div className="mr-[2px] flex w-[24px] items-center justify-center border border-[#9a9fa8] bg-[#dcdfe4]">
          <svg width="12" height="9" viewBox="0 0 12 9"><path d="M1 1l5 6 5-6" fill="none" stroke="#444" strokeWidth="2.800" /></svg>
        </div>
      </div>
      <div className="h-[6px] border-b-2 border-[#969ca8] bg-[#f3f4f6]" />
    </div>
  );
}

/* ---------- worksheet ---------- */

const WIDE = ["J", "K", "L", "M", "N", "O", "P", "Q", "R", "S", "T", "U", "V", "W", "X", "Y", "Z", "AA", "AB", "AC", "AD"];

function ColumnHeads() {
  return (
    <div className={`flex h-[20px] w-full overflow-hidden text-[16.500px] leading-[22px] ${SERIF}`}>
      <div className="flex w-[36px] shrink-0 items-end justify-end border-r border-b border-[#9a9fa8] bg-[#d9dde3] p-[4px]">
        <svg width="8" height="7" viewBox="0 0 8 7"><path d="M8 0v7H0z" fill="#b4b9c0" /></svg>
      </div>
      <div className="grid w-[989px] shrink-0 grid-cols-[214px_97px_97px_97px_97px_97px_96px_97px_97px] text-[#5c4a1a]">
        {"ABCDEFGHI".split("").map((c) => (
          <div key={c} className="border-r border-b border-[#c09a2c] bg-linear-to-b from-[#fbdc83] to-[#fdd651] text-center">{c}</div>
        ))}
      </div>
      <div className="flex flex-1 overflow-hidden bg-[#dfe3e8] text-[#444]">
        {WIDE.map((c) => (
          <div key={c} className="w-[67.150px] shrink-0 border-r border-b border-[#9a9fa8] bg-linear-to-b from-[#e4e7ea] to-[#dadee3] text-center">{c}</div>
        ))}
        <div className="flex-1 border-b border-[#9a9fa8] pl-[21px]">A</div>
      </div>
    </div>
  );
}

function RowHeads() {
  return (
    <div className={`flex w-[36px] shrink-0 flex-col overflow-hidden border-r border-[#9a9fa8] bg-[#dfe3e8] text-[#555] ${SERIF}`}>
      {ROW_HEIGHTS.map((h, i) => (
        <div
          key={i}
          style={{ height: h }}
          className={`flex shrink-0 items-end justify-center overflow-hidden border-b text-[16.500px] ${i === 0 ? "border-[#c09a2c] bg-[#fdd65b]" : "border-[#b7bcc4]"} ${h < 14 ? "leading-[12px]" : "leading-[17px]"}`}
        >
          {i + 1}
        </div>
      ))}
    </div>
  );
}

function Num({ value, bold, last }: { value: string; bold?: boolean; last: boolean }) {
  return (
    <div className={`flex items-center justify-end border-black text-[12.200px] leading-none ${bold || value === "–" ? "font-bold" : ""} ${last ? "pr-[1px]" : "border-r-2 pr-[3px]"}`}>
      {value}
    </div>
  );
}

function BankRow({ bank, last }: { bank: Bank; last?: boolean }) {
  return (
    <div className={`${GRID} h-[25px] shrink-0 border-black ${last ? "border-b-[3px]" : "border-b-2"}`}>
      <div className="flex flex-col border-r-2 border-black">
        <div className={`flex h-[13px] shrink-0 items-center border-b ${LINE} pt-[2px] pl-[2px] text-[12px] leading-none whitespace-nowrap`}>
          <span className="w-[137px]">{bank.zh}</span>
          {bank.mark && <span className="text-[10px] font-bold">#</span>}
        </div>
        <div className="pl-[1px] text-[10px] leading-[11px] whitespace-nowrap">{bank.en}</div>
      </div>
      {bank.v.map((n, i) => <Num key={i} value={n} last={i === 7} />)}
    </div>
  );
}

function TotalRow() {
  const v = ["81,747", "7,606,029", "21,122,002", "45,171", "28,854,950", "28,748,112", "0.37", "100.00"];
  return (
    <div className={`${GRID} h-[25px] shrink-0 border-b-2 border-black`}>
      <div className="flex flex-col border-r-2 border-black">
        <div className={`flex h-[13px] shrink-0 items-center border-b ${LINE} pt-[1px] pl-[2px] text-[12.800px] leading-none font-bold`}>
          <span className="w-[85px]">總</span>計
        </div>
        <div className="pl-[1px] text-[10px] leading-[11px]">Total</div>
      </div>
      {v.map((n, i) => <Num key={i} value={n} bold last={i === 7} />)}
    </div>
  );
}

/* Stacked header lines of one column; columns under the group heading have three, the rest four. */
function HeadCol({ lines, low, className = "" }: { lines: string[]; low?: boolean; className?: string }) {
  const hs = ["h-[20px] pt-[3px]", "h-[21px] pt-[3px]", low ? "h-[20px] pt-[8px]" : "h-[20px]", "h-[19px] pb-[2px]"];
  const use = lines.length === 4 ? hs : hs.slice(1);
  return (
    <div className={`flex flex-col border-black ${className}`}>
      {lines.map((t, i) => (
        <div key={i} className={`flex ${use[i]} items-center justify-center ${i < lines.length - 1 ? `border-b ${LINE}` : ""} text-[12.200px] leading-none whitespace-pre`}>
          {t}
        </div>
      ))}
    </div>
  );
}

function TableHead() {
  return (
    <div className={`${GRID} h-[83px] shrink-0 border-b-[3px] border-black`}>
      <HeadCol className="border-r-2" lines={["", "銀　　　行　　　別", "by Institution", ""]} />
      <div className="col-span-5 flex flex-col border-r-2 border-black">
        <div className="flex h-[20px] items-center border-b-2 border-black pl-[147px] text-[12.600px] leading-none">
          <span className="w-[98px]">本</span>
          <span className="w-[18px]">月</span>
          <span>Current Month</span>
        </div>
        <div className="grid flex-1 grid-cols-[97px_97px_97px_97px_95px]">
          <HeadCol className="border-r-2" lines={["貼現透支", "Discounts &", "Overdrafts"]} />
          <HeadCol className="border-r-2" lines={["短期放款", "Short-term Loans", ""]} />
          <HeadCol className="border-r-2" lines={["中長期放款", "Medium and", "Long-term Loans"]} />
          <HeadCol className="border-r-2" lines={["進出口押匯", "Advances on", "Imports&Exports"]} />
          <HeadCol lines={["合　　計", "Total", ""]} />
        </div>
      </div>
      <HeadCol className="border-r-2" lines={["上　　月", "", "Last Month", ""]} />
      <HeadCol className="border-r-2" low lines={["本月與上月", "比較增減%", "Compare with", "Last Month   +-%"]} />
      <HeadCol low lines={["本月市場", "占有率%", "Market Share", ""]} />
    </div>
  );
}

function UnitRow({ left, right }: { left: string; right: string }) {
  return (
    <div className={`${GRID} h-[22px] shrink-0 border-b-[3px] border-black text-[15.600px] leading-none whitespace-pre`}>
      <div className={`border-r ${LINE}`} />
      <div className={`border-r ${LINE}`} />
      <div className="col-span-2 flex items-center justify-end pr-[6px]">{left}</div>
      <div className={`col-span-2 flex items-center border-r border-l ${LINE} pl-[6px]`}>{right}</div>
      <div className="col-span-3 flex items-center justify-end pt-[2px] pr-[6px] text-[12.400px]">
        <span className="text-[11.600px]">單位：新臺幣百萬元</span>, % NT$ Million,%
      </div>
    </div>
  );
}

function Watermark({ n, top, small, smallTop }: { n: string; top: string; small: string; smallTop: string }) {
  return (
    <>
      <div className={`absolute left-[305px] ${top} flex h-[90px] w-[277px] items-center justify-between text-[84px] leading-none font-light text-[#999] mix-blend-multiply [font-family:'Noto_Sans_CJK_TC',sans-serif]`}>
        <span>第</span>
        <span className="mr-[6px] text-[86px] font-normal [font-family:'Liberation_Sans',sans-serif]">{n}</span>
        <span>頁</span>
      </div>
      <div className={`absolute left-[924px] ${smallTop} text-[10.500px] leading-none text-[#999]`}>第 {small} 頁</div>
    </>
  );
}

function Sheet() {
  return (
    <div className={`relative flex w-[991px] shrink-0 flex-col overflow-hidden border-r-[5px] border-l-2 border-[#0000d0] bg-white text-black ${SERIF}`}>
      <div className="flex h-[33px] shrink-0 items-center justify-center border-t-2 border-b-4 border-t-[#ffee3a] border-b-black pt-[2px] text-[21.800px] leading-none">4-1　一般銀行及信用合作社放款月底餘額</div>
      <div className={`flex h-[29px] shrink-0 items-center justify-center border-b ${LINE} pt-[2px] text-[21.700px] leading-none`}>4-1 Loans at General Banks and Credit Cooperatives</div>
      <div className={`flex h-[20px] shrink-0 items-center justify-center border-b ${LINE} pl-[8px] text-[15.900px] leading-none whitespace-pre`}>(1) 本國銀行（全行）  Domestic Banks (All Branches)</div>
      <UnitRow left="民國108年  3月底" right="End of Mar. 2019" />
      <TableHead />
      <TotalRow />
      {PAGE_ONE.map((b, i) => (
        <BankRow key={b.en} bank={b} last={i === PAGE_ONE.length - 1} />
      ))}
      <div className={`${GRID} h-[17px] shrink-0 border-b ${LINE} text-[12.200px] leading-none`}>
        <div className={`flex items-center border-r ${LINE} pl-[2px]`}>資料來源：金融機構申報資料。</div>
        {[1, 2, 3, 4, 5, 6, 7, 8].map((c) => <div key={c} className={`border-r ${LINE}`} />)}
      </div>
      <div className={`${GRID} h-[17px] shrink-0 border-b ${LINE} text-[12.200px] leading-none`}>
        <div className={`col-span-2 flex items-center border-r ${LINE} pl-[2px]`}>說　　明：#係金融控股公司之子公司。</div>
        {[2, 3, 4, 5, 6, 7, 8].map((c) => <div key={c} className={`border-r ${LINE}`} />)}
      </div>
      <div className="flex h-[32px] shrink-0 items-center justify-center pt-[3px] text-[21.800px] leading-none">4-1　一般銀行及信用合作社放款月底餘額（續一）</div>
      <div className={`flex h-[31px] shrink-0 items-center justify-center border-b ${LINE} pt-[2px] text-[21.700px] leading-none`}>4-1 Loans at General Banks and Credit Cooperatives（Cont.1）</div>
      <div className={`flex h-[20px] shrink-0 items-center justify-center border-b ${LINE} pl-[8px] text-[15.900px] leading-none whitespace-pre`}>(1) 本國銀行（全行）  Domestic Banks (All Branches)</div>
      <UnitRow left="0" right="0" />
      <TableHead />
      {PAGE_TWO.map((b) => <BankRow key={b.zh} bank={b} />)}

      {/* page break guides and page labels float above the cells */}
      <Watermark n="1" top="top-[251px]" small="4" smallTop="top-[295px]" />
      <Watermark n="2" top="top-[863px]" small="5" smallTop="top-[909px]" />
      <div className="absolute top-[2px] bottom-0 left-[887px] w-[3px] bg-[repeating-linear-gradient(to_bottom,#0000d0_0_14px,transparent_14px_18.800px)]" />
      <div className="absolute top-[600px] right-0 left-0 h-[3px] bg-[repeating-linear-gradient(to_right,#0000d0_0_14px,transparent_14px_18.800px)]" />
    </div>
  );
}

/* ---------- scroll bars, sheet tabs, status ---------- */

function VerticalScroll() {
  return (
    <div className="-mt-[20px] flex w-[32px] shrink-0 border-l border-[#9a9fa8] bg-[#e9ecf0]">
      <div className="flex w-[26px] flex-col items-center border-r-2 border-[#8f949d] bg-[#dde1e7]">
        <div className="mt-px h-[12px] w-[22px] border border-[#8f949d] bg-white px-[4px] pt-[4px]"><div className="h-px bg-[#666]" /></div>
        <svg className="mt-[10px]" width="14" height="8" viewBox="0 0 14 8"><path d="M7 0l7 8H0z" fill="#454a52" /></svg>
        <div className="mt-[9px] flex h-[580px] w-[23px] flex-col items-center justify-center gap-[2px] rounded-sm border border-[#8f949d] bg-linear-to-r from-[#f6f7f9] to-[#e6e9f2]">
          {[0, 1, 2, 3].map((i) => <span key={i} className="h-px w-[11px] bg-[#777]" />)}
        </div>
        <svg className="mt-auto mb-[9px]" width="14" height="8" viewBox="0 0 14 8"><path d="M7 8l7-8H0z" fill="#454a52" /></svg>
      </div>
    </div>
  );
}

function SheetTabs() {
  const slash = (
    <svg className="shrink-0" width="24" height="24" viewBox="0 0 24 24"><path d="M1 24 23 0" stroke="#9499a2" strokeWidth="1.500" /></svg>
  );
  return (
    <div className="flex h-[25px] w-full items-stretch border-t border-[#9a9fa8] bg-[#dde1e7] text-[21px] leading-none text-[#444a54]">
      <div className="flex w-[98px] shrink-0 items-center gap-[16px] pl-[9px]">
        <svg width="11" height="12" viewBox="0 0 11 12"><path d="M0 0h2.500v12H0zM10 0v12L4 6z" fill="#3e434b" /></svg>
        <svg width="8" height="12" viewBox="0 0 8 12"><path d="M7 0v12L1 6z" fill="#3e434b" /></svg>
        <svg width="8" height="12" viewBox="0 0 8 12"><path d="M1 0v12l6-6z" fill="#3e434b" /></svg>
        <svg width="11" height="12" viewBox="0 0 11 12"><path d="M8.500 0H11v12H8.500zM1 0v12l6-6z" fill="#3e434b" /></svg>
      </div>
      <div className="flex w-[97px] shrink-0 items-center border-l border-[#9a9fa8] bg-white pl-[14px] whitespace-nowrap">工作表1</div>
      <svg className="shrink-0" width="24" height="24" viewBox="0 0 24 24"><path d="M0 0h23L1 24H0z" fill="#fff" /><path d="M1 24 23 0" stroke="#9499a2" strokeWidth="1.500" /></svg>
      <div className="-ml-[5px] flex w-[82px] shrink-0 items-center whitespace-nowrap">工作表2</div>
      {slash}
      <div className="-ml-[4px] flex w-[81px] shrink-0 items-center whitespace-nowrap">工作表3</div>
      {slash}
      <svg className="-ml-[3px] shrink-0 self-center" width="25" height="20" viewBox="0 0 25 20">
        <path d="M8 4h13v8c0 3-2 5-6 7H8z" fill="#eef3fc" stroke="#50699c" strokeWidth="1.600" />
        <path d="M6 0l1.200 3.500L11 3 8.500 6l2.500 3-3.800-.5L6 12l-1.200-3.500L1 9l2.500-3L1 3l3.800.5z" fill="#f3a72c" />
      </svg>
      <div className="ml-[4px]">{slash}</div>
      <div className="flex-1" />
      <div className="flex w-[986px] shrink-0 items-center">
        <div className="h-full w-[11px] border border-[#8f949d] bg-[#f4f5f7]"><div className="mx-auto mt-[4px] h-[14px] w-px bg-[#777]" /></div>
        <svg className="ml-[9px]" width="8" height="14" viewBox="0 0 8 14"><path d="M8 0v14L0 7z" fill="#454a52" /></svg>
        <div className="ml-[12px] flex h-full w-[876px] items-center justify-center gap-[2px] border border-[#8f949d] bg-linear-to-b from-[#f4f6fa] to-[#dfe4ef]">
          {[0, 1, 2, 3].map((i) => <span key={i} className="h-[11px] w-px bg-[#777]" />)}
        </div>
        <svg className="ml-[42px]" width="8" height="14" viewBox="0 0 8 14"><path d="M0 0v14l8-7z" fill="#454a52" /></svg>
        <div className="ml-[9px] h-full w-[11px] border border-[#8f949d] bg-[#f4f5f7]"><div className="mx-auto mt-[4px] h-[14px] w-px bg-[#777]" /></div>
      </div>
      <div className="w-[32px] shrink-0 border-l border-[#b7bcc4]" />
    </div>
  );
}

function StatusBar() {
  return (
    <footer className="flex h-[36px] w-full items-center border-t border-b-2 border-t-[#8f949d] border-b-[#5a5f68] bg-linear-to-b from-[#e6e8ea] via-[#cfd2d6] to-[#bcc0c5] text-[18.400px] leading-none text-[#444a54]">
      <span className="ml-[13px]">就緒</span>
      <div className="ml-[15px] h-[27px] w-px bg-[#9ba0a8] shadow-[1px_0_0_#f3f3f3]" />
      <svg className="mb-[2px] ml-[13px]" width="25" height="22" viewBox="0 0 25 22">
        <rect x="2" y="3" width="22" height="18" fill="#fff" stroke="#5278b8" />
        <rect x="2" y="3" width="22" height="4" fill="#5b8bd8" />
        <path d="M2 11h22M2 16h22M9 7v14M16 7v14" stroke="#9bb4de" />
        <circle cx="5.500" cy="6" r="5" fill="#d8452c" />
      </svg>
      <div className="ml-[15px] h-[27px] w-px bg-[#9ba0a8] shadow-[1px_0_0_#f3f3f3]" />
      <div className="flex-1" />
      <div className="h-[29px] w-px bg-[#9ba0a8] shadow-[1px_0_0_#f3f3f3]" />
      <svg className="ml-[11px]" width="21" height="17" viewBox="0 0 21 17" fill="#fff" stroke="#555b65" strokeWidth="1.400">
        <path d="M1 1h19v15H1zM7.300 1v15M13.700 1v15M1 6h19M1 11h19" />
      </svg>
      <svg className="ml-[7px]" width="21" height="18" viewBox="0 0 21 18" fill="#fff" stroke="#555b65" strokeWidth="1.400">
        <rect x="1" y="1" width="19" height="16" fill="#b9bdc3" />
        <rect x="5.500" y="3" width="10" height="12" />
        <path d="M7.500 6h6M7.500 9h6M7.500 12h6" strokeWidth="1" />
      </svg>
      <div className="relative ml-[5px] flex h-[28px] w-[31px] items-center justify-center rounded-[4px] border-2 border-[#d9a93b] bg-[#fff0a8]">
        <svg width="22" height="19" viewBox="0 0 22 19" stroke="#555b65" strokeWidth="1.300">
          <rect x="1" y="1" width="20" height="17" fill="#9aa0a8" />
          <path d="M2 2h7v10H2zM10 2h6v10h-6z" fill="#fff" />
        </svg>
        <div className="absolute -top-[20px] -left-[9px] h-[52px] w-[49px] rounded-full border-4 border-[#ee0000]" />
        <div className="absolute -top-[54px] left-[2px] text-[28.400px] leading-none font-light whitespace-nowrap text-[#f80000]">分頁預覽</div>
      </div>
      <span className="ml-[13px] w-[41px] text-[19px] tracking-[-0.200px]">60%</span>
      <svg className="ml-[11px]" width="24" height="24" viewBox="0 0 24 24"><circle cx="12" cy="12" r="10.500" fill="#f4f5f6" stroke="#666c75" strokeWidth="1.600" /><path d="M6 12h12" stroke="#444" strokeWidth="2.800" /></svg>
      <svg width="156" height="24" viewBox="0 0 156 24">
        <path d="M0 11h156M79 6v10" stroke="#868c95" strokeWidth="1.500" />
        <path d="M0 12.500h156" stroke="#f0f0f0" />
        <path d="M41 2h13v13l-6.500 6L41 15z" fill="#f4f5f6" stroke="#666c75" strokeWidth="1.500" />
      </svg>
      <svg className="mr-[7px]" width="24" height="24" viewBox="0 0 24 24"><circle cx="12" cy="12" r="10.500" fill="#f4f5f6" stroke="#666c75" strokeWidth="1.600" /><path d="M6 12h12M12 6v12" stroke="#444" strokeWidth="2.800" /></svg>
    </footer>
  );
}

export default function App() {
  return (
    <div className={`flex h-[1346px] w-[2500px] flex-col overflow-hidden bg-[#e2e4e6] ${SANS}`}>
      <TitleBar />
      <RibbonTabs />
      <div className="flex h-[149px] w-full shrink-0 bg-linear-to-b from-white from-40% to-[#e9ebee] text-[#3f444c]">
        <ClipboardGroup />
        <FontGroup />
        <AlignGroup />
        <NumberGroup />
        <StylesGroup />
        <CellsGroup />
        <EditingGroup />
      </div>
      <FormulaBar />
      <div className="w-[2468px] shrink-0"><ColumnHeads /></div>
      <div className="flex h-[989px] w-full shrink-0">
        <RowHeads />
        <Sheet />
        <div className="relative flex-1 bg-[#a0a0a0]">
          <div className="absolute top-0 -left-[5px] h-[28px] w-[5px] bg-[#ffff00]" />
          <div className="absolute top-[27px] -left-[7px] h-[9px] w-[7px] border-2 border-[#333] bg-[#ffff30]" />
        </div>
        <VerticalScroll />
      </div>
      <SheetTabs />
      <StatusBar />
    </div>
  );
}
